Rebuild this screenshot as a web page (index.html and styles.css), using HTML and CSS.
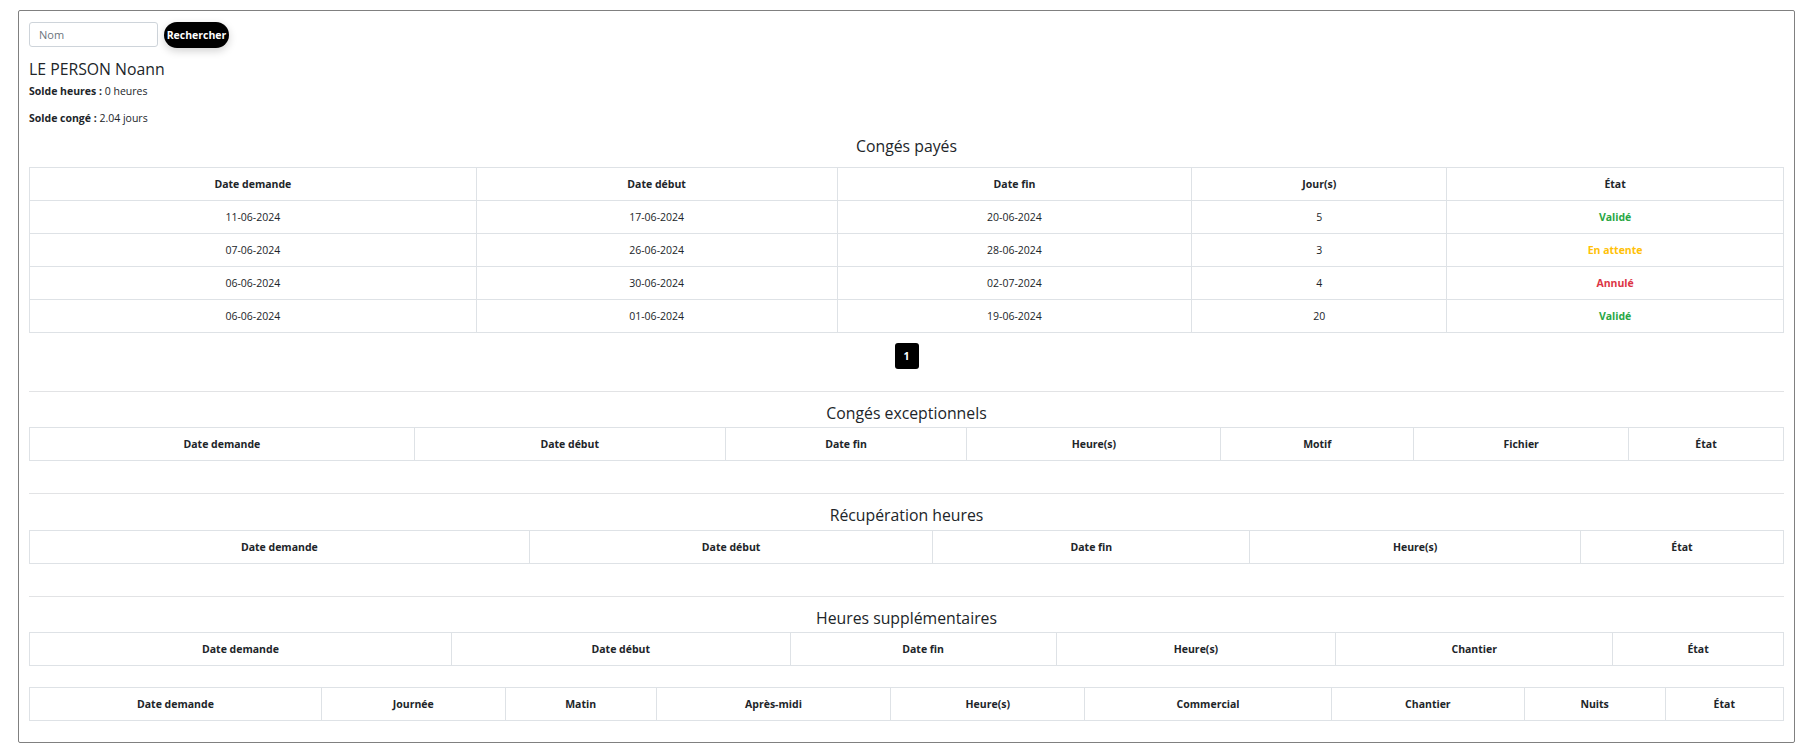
FILE: index.html
```html
<!DOCTYPE html>
<html lang="fr">
<head>
  <meta charset="UTF-8">
  <meta name="viewport" content="width=device-width, initial-scale=1.0">
  <title>Solde salarié</title>
  <link rel="stylesheet" href="styles.css">
</head>
<body>

  <div class="cadre">
    <div class="recherche">
      <input type="text" placeholder="Nom">
      <button>Rechercher</button>
    </div>

    <h2 class="nom">LE PERSON Noann</h2>
    <p class="solde"><b>Solde heures :</b> 0 heures</p>
    <p class="solde"><b>Solde congé :</b> 2.04 jours</p>

    <!-- Congés payés -->
    <section class="bloc premier">
      <h3>Congés payés</h3>
      <table class="tableau t-payes">
        <thead>
          <tr><th>Date demande</th><th>Date début</th><th>Date fin</th><th>Jour(s)</th><th>État</th></tr>
        </thead>
        <tbody>
          <tr><td>11-06-2024</td><td>17-06-2024</td><td>20-06-2024</td><td>5</td><td class="valide">Validé</td></tr>
          <tr><td>07-06-2024</td><td>26-06-2024</td><td>28-06-2024</td><td>3</td><td class="attente">En attente</td></tr>
          <tr><td>06-06-2024</td><td>30-06-2024</td><td>02-07-2024</td><td>4</td><td class="annule">Annulé</td></tr>
          <tr><td>06-06-2024</td><td>01-06-2024</td><td>19-06-2024</td><td>20</td><td class="valide">Validé</td></tr>
        </tbody>
      </table>
      <div class="pagination">
        <span class="page actif">1</span>
      </div>
    </section>

    <hr>

    <!-- Congés exceptionnels -->
    <section class="bloc">
      <h3>Congés exceptionnels</h3>
      <table class="tableau t-except">
        <thead>
          <tr><th>Date demande</th><th>Date début</th><th>Date fin</th><th>Heure(s)</th><th>Motif</th><th>Fichier</th><th>État</th></tr>
        </thead>
        <tbody></tbody>
      </table>
    </section>

    <hr>

    <!-- Récupération heures -->
    <section class="bloc">
      <h3>Récupération heures</h3>
      <table class="tableau t-recup">
        <thead>
          <tr><th>Date demande</th><th>Date début</th><th>Date fin</th><th>Heure(s)</th><th>État</th></tr>
        </thead>
        <tbody></tbody>
      </table>
    </section>

    <hr>

    <!-- Heures supplémentaires -->
    <section class="bloc dernier">
      <h3>Heures supplémentaires</h3>
      <table class="tableau t-supp">
        <thead>
          <tr><th>Date demande</th><th>Date début</th><th>Date fin</th><th>Heure(s)</th><th>Chantier</th><th>État</th></tr>
        </thead>
        <tbody></tbody>
      </table>
      <table class="tableau t-detail">
        <thead>
          <tr><th>Date demande</th><th>Journée</th><th>Matin</th><th>Après-midi</th><th>Heure(s)</th><th>Commercial</th><th>Chantier</th><th>Nuits</th><th>État</th></tr>
        </thead>
        <tbody></tbody>
      </table>
    </section>
  </div>

</body>
</html>
```

FILE: styles.css
```css
:root {
  --texte: #212529;
  --bordure: #dee2e6;
}
body {
  margin: 0;
  padding: 10px 16px 14px 18px;
  font-family: "Open Sans", "Noto Sans", sans-serif;
  font-size: 10.5px;
  color: var(--texte);
  background: #fff;
}
.cadre {
  border: 1px solid #808080;
  border-radius: 2px;
  padding: 11px 10px 21px 10px;
}
.recherche {
  display: flex;
  align-items: center;
  gap: 6px;
  height: 25px;
}
.recherche input {
  box-sizing: border-box;
  width: 129px;
  height: 25px;
  border: 1px solid #ced4da;
  border-radius: 3px;
  padding: 0 9px;
  font-family: inherit;
  font-size: 11px;
  color: var(--texte);
}
.recherche input::placeholder {
  color: #6c757d;
}
.recherche button {
  box-sizing: border-box;
  width: 65px;
  height: 26px;
  border: none;
  border-radius: 13px;
  background: #000;
  color: #fff;
  font-family: inherit;
  font-size: 10.5px;
  font-weight: bold;
  padding: 0;
  box-shadow: 0 3px 8px rgba(0, 0, 0, 0.18);
  cursor: pointer;
}
.nom {
  margin: 11.5px 0 4.5px;
  font-size: 15.8px;
  line-height: 20px;
  font-weight: normal;
}
.solde {
  margin: 0 0 10.5px;
  font-size: 10.5px;
  line-height: 16px;
}
.bloc h3 {
  margin: 11px 0 4.5px;
  font-size: 15.8px;
  line-height: 20px;
  font-weight: normal;
  text-align: center;
}
.premier h3 {
  margin: 1px 0 10.5px;
}
.bloc {
  margin-bottom: 32px;
}
.premier {
  margin-bottom: 22px;
}
.dernier {
  margin-bottom: 0;
}
hr {
  border: none;
  border-top: 1px solid #e2e3e5;
  margin: 0;
}
.tableau {
  width: 100%;
  border-collapse: collapse;
  table-layout: fixed;
}
.tableau th, .tableau td {
  box-sizing: border-box;
  border: 1px solid var(--bordure);
  padding: 8px 4px;
  line-height: 16px;
  text-align: center;
  white-space: nowrap;
}
.tableau th {
  font-weight: bold;
}
.t-detail {
  margin-top: 21px;
}
.valide, .attente, .annule {
  font-weight: bold;
}
.valide { color: #28a745; }
.attente { color: #ffc107; }
.annule { color: #dc3545; }

/* largeurs des colonnes (en % de la largeur du tableau) */
.t-payes th:nth-child(1) { width: 25.47%; }
.t-payes th:nth-child(2) { width: 20.57%; }
.t-payes th:nth-child(3) { width: 20.23%; }
.t-payes th:nth-child(4) { width: 14.53%; }
.t-payes th:nth-child(5) { width: 19.2%; }

.t-except th:nth-child(1) { width: 21.94%; }
.t-except th:nth-child(2) { width: 17.72%; }
.t-except th:nth-child(3) { width: 13.79%; }
.t-except th:nth-child(4) { width: 14.47%; }
.t-except th:nth-child(5) { width: 11%; }
.t-except th:nth-child(6) { width: 12.25%; }
.t-except th:nth-child(7) { width: 8.83%; }

.t-recup th:nth-child(1) { width: 28.49%; }
.t-recup th:nth-child(2) { width: 23.02%; }
.t-recup th:nth-child(3) { width: 18.06%; }
.t-recup th:nth-child(4) { width: 18.86%; }
.t-recup th:nth-child(5) { width: 11.57%; }

.t-supp th:nth-child(1) { width: 24.05%; }
.t-supp th:nth-child(2) { width: 19.32%; }
.t-supp th:nth-child(3) { width: 15.16%; }
.t-supp th:nth-child(4) { width: 15.95%; }
.t-supp th:nth-child(5) { width: 15.78%; }
.t-supp th:nth-child(6) { width: 9.74%; }

.t-detail th:nth-child(1) { width: 16.64%; }
.t-detail th:nth-child(2) { width: 10.48%; }
.t-detail th:nth-child(3) { width: 8.6%; }
.t-detail th:nth-child(4) { width: 13.39%; }
.t-detail th:nth-child(5) { width: 11.05%; }
.t-detail th:nth-child(6) { width: 14.07%; }
.t-detail th:nth-child(7) { width: 10.99%; }
.t-detail th:nth-child(8) { width: 8.03%; }
.t-detail th:nth-child(9) { width: 6.75%; }

.pagination {
  display: flex;
  justify-content: center;
  margin-top: 10px;
}
.page {
  display: flex;
  align-items: center;
  justify-content: center;
  width: 24px;
  height: 26px;
  border-radius: 3px;
  font-weight: bold;
  font-size: 10.5px;
}
.page.actif {
  background: #000;
  color: #fff;
}
```
